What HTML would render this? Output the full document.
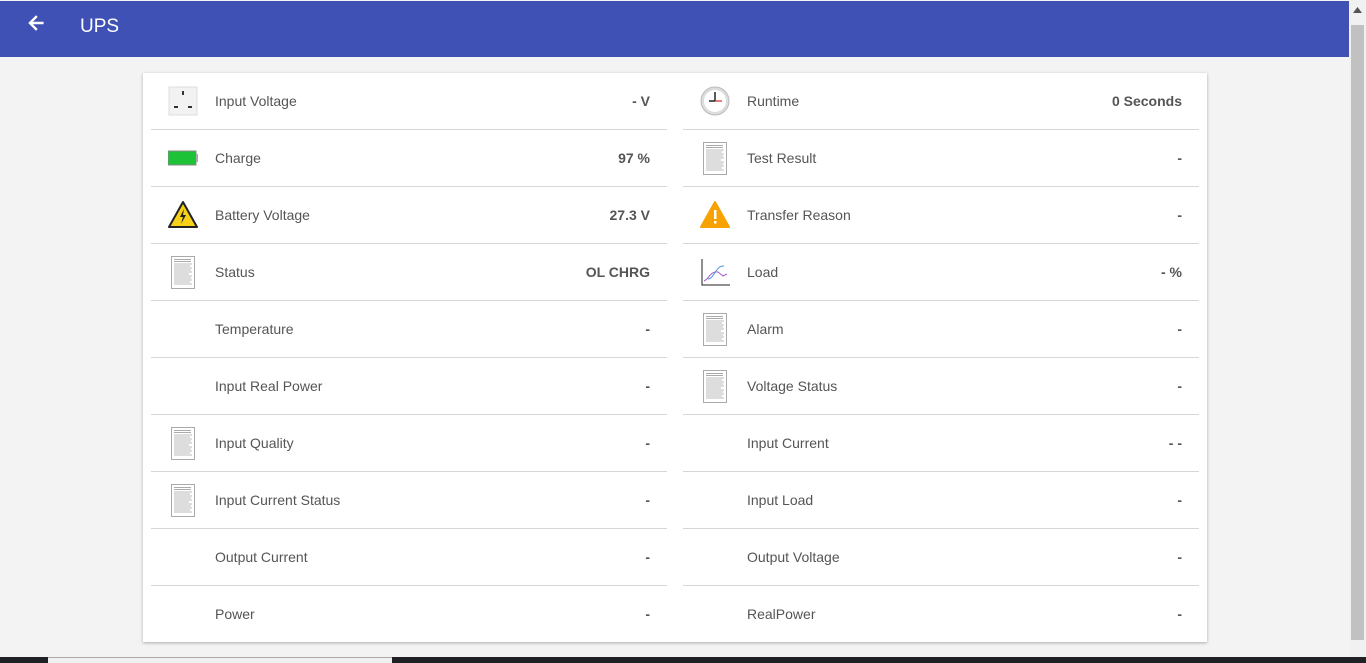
<!DOCTYPE html>
<html><head><style>
*{margin:0;padding:0;box-sizing:border-box}
body{width:1366px;height:663px;overflow:hidden;background:#f3f3f3;font-family:"Liberation Sans",sans-serif;position:relative}
.hdr{position:absolute;left:0;top:1px;width:1349px;height:56px;background:#3f51b5;color:#fff}
.hdr .t{position:absolute;left:80px;top:15px;font-size:19px}
.sb{position:absolute;left:1349px;top:0;width:17px;height:657px;background:#f1f1f1}
.thumb{position:absolute;left:2px;top:25px;width:13px;height:615px;background:#c1c1c1}
.card{position:absolute;left:143px;top:73px;width:1064px;height:569px;background:#fff;box-shadow:0 1px 3px rgba(0,0,0,.3)}
.col{position:absolute;top:0;width:516px}
.row{position:relative;height:57px;border-bottom:1px solid #d6d6d6;font-size:14px;color:#555}
.row.last{border-bottom:none}
.row .l{position:absolute;left:64px;top:20px}
.row .v{position:absolute;right:17px;top:20px;font-weight:bold;color:#555}
.ic{position:absolute;left:17px;top:13px;width:30px;height:30px}
.doc{position:absolute;left:20px;top:12px;width:24px;height:33px}
.bot{position:absolute;left:0;top:657px;width:1366px;height:6px;background:#202124}
.bot i{position:absolute;left:48px;top:0;width:344px;height:6px;background:#f1f1f1;border-top:1px solid #aaa}
</style></head><body>
<div class="hdr"><svg style="position:absolute;left:25px;top:11px" width="22" height="22" viewBox="0 0 24 24"><path d="M20 11H7.8l5.6-5.6L12 4l-8 8 8 8 1.4-1.4L7.8 13H20z" fill="#fff" stroke="#fff" stroke-width="0.6"/></svg><div class="t">UPS</div></div>
<div class="sb"><svg style="position:absolute;left:4px;top:7px" width="9" height="6"><path d="M0 6L4.5 0L9 6z" fill="#555"/></svg><div class="thumb"></div></div>
<svg width="0" height="0" style="position:absolute"><defs>
<symbol id="doc" viewBox="0 0 24 33" preserveAspectRatio="none"><rect x="0.5" y="0.5" width="23" height="32" fill="#fff" stroke="#aaa"/><g stroke="#aaa" stroke-width="1"><path d="M3 3.5h17M3 5.5h17"/><path d="M3 8h18M3 10h16M3 12h18M3 14h17M3 16h18M3 18h15M3 20h18M3 22h17M3 24h18M3 26h16M3 28h18" stroke="#bbb"/></g></symbol>
</defs></svg>
<div class="card">
<div class="col" style="left:8px">
<div class="row"><svg class="ic" viewBox="0 0 30 30"><rect x="1" y="1" width="28" height="28" fill="#f2f2f2" stroke="#ddd"/><rect x="14" y="5" width="2" height="4" fill="#333"/><rect x="6" y="20" width="4" height="2" fill="#333"/><rect x="20" y="20" width="4" height="2" fill="#333"/></svg><span class="l">Input Voltage</span><span class="v">- V</span></div>
<div class="row"><svg class="ic" viewBox="0 0 30 30"><rect x="0" y="8" width="28" height="14" fill="#1dc236" stroke="#888"/><rect x="28" y="11" width="3" height="8" fill="#aaa"/></svg><span class="l">Charge</span><span class="v">97 %</span></div>
<div class="row"><svg class="ic" viewBox="0 0 30 30"><path d="M15 2L29 27H1z" fill="#f7d117" stroke="#222" stroke-width="2" stroke-linejoin="round"/><path d="M16 9l-4 8h3l-2 7 5-9h-3z" fill="#222"/></svg><span class="l">Battery Voltage</span><span class="v">27.3 V</span></div>
<div class="row"><svg class="doc"><use href="#doc"/></svg><span class="l">Status</span><span class="v">OL CHRG</span></div>
<div class="row"><span class="l">Temperature</span><span class="v">-</span></div>
<div class="row"><span class="l">Input Real Power</span><span class="v">-</span></div>
<div class="row"><svg class="doc"><use href="#doc"/></svg><span class="l">Input Quality</span><span class="v">-</span></div>
<div class="row"><svg class="doc"><use href="#doc"/></svg><span class="l">Input Current Status</span><span class="v">-</span></div>
<div class="row"><span class="l">Output Current</span><span class="v">-</span></div>
<div class="row last"><span class="l">Power</span><span class="v">-</span></div>
</div>
<div class="col" style="left:540px">
<div class="row"><svg class="ic" viewBox="0 0 30 30"><circle cx="15" cy="15" r="14" fill="#ddd" stroke="#bbb"/><circle cx="15" cy="15" r="11" fill="#fff"/><path d="M15 6v9" stroke="#222" stroke-width="1.5"/><path d="M15 15h7" stroke="#d22" stroke-width="1.2"/><path d="M9 15h6" stroke="#222" stroke-width="1.5"/></svg><span class="l">Runtime</span><span class="v">0 Seconds</span></div>
<div class="row"><svg class="doc"><use href="#doc"/></svg><span class="l">Test Result</span><span class="v">-</span></div>
<div class="row"><svg class="ic" viewBox="0 0 30 30"><path d="M15 2L29 27H1z" fill="#f7a200" stroke="#f7a200" stroke-width="2" stroke-linejoin="round"/><rect x="14" y="10" width="2.5" height="9" fill="#fff"/><rect x="14" y="21" width="2.5" height="2.5" fill="#fff"/></svg><span class="l">Transfer Reason</span><span class="v">-</span></div>
<div class="row"><svg class="ic" viewBox="0 0 30 30"><path d="M2 2v26h28" stroke="#222" fill="none"/><path d="M4 24c5-2 6-10 14-9l5 4 4-2" stroke="#a55ccc" fill="none"/><path d="M8 22c6 0 8-14 16-13" stroke="#4a90e2" fill="none"/></svg><span class="l">Load</span><span class="v">- %</span></div>
<div class="row"><svg class="doc"><use href="#doc"/></svg><span class="l">Alarm</span><span class="v">-</span></div>
<div class="row"><svg class="doc"><use href="#doc"/></svg><span class="l">Voltage Status</span><span class="v">-</span></div>
<div class="row"><span class="l">Input Current</span><span class="v">- -</span></div>
<div class="row"><span class="l">Input Load</span><span class="v">-</span></div>
<div class="row"><span class="l">Output Voltage</span><span class="v">-</span></div>
<div class="row last"><span class="l">RealPower</span><span class="v">-</span></div>
</div>
</div>
<div class="bot"><i></i></div>
</body></html>
